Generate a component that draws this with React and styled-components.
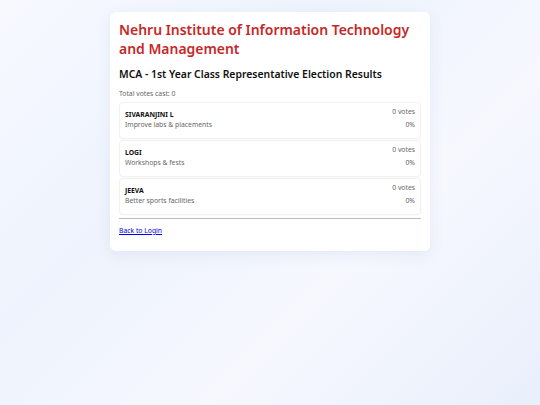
import React from 'react';
import styled, { createGlobalStyle } from 'styled-components';

const GlobalStyle = createGlobalStyle`
    html, body { margin:0; padding:0; }
    body {
        font-family: "Noto Sans", "Open Sans", sans-serif;
        min-height:405px;
        background: linear-gradient(135deg, #f7f9ff 0%, #eef3fd 35%, #f6f8fe 65%, #e9effb 100%);
    }
`;

const Page = styled.div`
    display:flex;
    justify-content:center;
    align-items:flex-start;
    padding-top:12px;
    min-height:405px;
    box-sizing:border-box;
`;

const Card = styled.div`
    width:320px;
    box-sizing:border-box;
    background:#fff;
    border-radius:6px;
    padding:9px 9px 15px;
    box-shadow: 0 4px 14px rgba(120,140,190,0.12);
`;

const Title = styled.h1`
    margin:0;
    color:#c62828;
    font-size:13.95px;
    line-height:18.5px;
    font-weight:600;
`;

const Subtitle = styled.h2`
    margin:9px 0 0;
    font-size:10.4px;
    line-height:14px;
    font-weight:600;
    color:#111;
`;

const Total = styled.p`
    margin:8px 0 3px;
    font-size:6.8px;
    line-height:10px;
    color:#666;
`;

const List = styled.div`
    display:flex;
    flex-direction:column;
    gap:1px;
`;

const Row = styled.div`
    display:flex;
    justify-content:space-between;
    height:37px;
    box-sizing:border-box;
    padding:4px 5px 0 5px;
    border:1px solid #f1f1f4;
    border-radius:4px;
    background:#fff;
    box-shadow: 0 1px 2px rgba(0,0,0,0.02);
`;

const Name = styled.div`
    font-size:6.8px;
    font-weight:700;
    color:#111;
    margin-top:3px;
    line-height:9.5px;
`;

const Desc = styled.div`
    font-size:6.8px;
    color:#666;
    line-height:9.5px;
`;

const Stats = styled.div`
    display:flex;
    flex-direction:column;
    align-items:flex-end;
    font-size:6.8px;
    color:#666;
    line-height:9.5px;
    gap:3.5px;
`;

const Divider = styled.hr`
    border:none;
    border-top:1px solid #bbb;
    margin:3px 0 6px;
`;

const Footer = styled.div`
    font-size:6.8px;
    line-height:10px;
    padding-top:1px;
`;

const BackLink = styled.a`
    color:#0000ee;
    text-decoration:underline;
`;

const candidates = [
    { name: 'SIVARANJINI L', desc: 'Improve labs & placements' },
    { name: 'LOGI', desc: 'Workshops & fests' },
    { name: 'JEEVA', desc: 'Better sports facilities' },
];

export default function App() {
    return (
        <React.Fragment>
            <GlobalStyle />
            <Page>
                <Card>
                    <Title>Nehru Institute of Information Technology and Management</Title>
                    <Subtitle>MCA - 1st Year Class Representative Election Results</Subtitle>
                    <Total>Total votes cast: 0</Total>
                    <List>
                        {candidates.map(c => (
                            <Row key={c.name}>
                                <div>
                                    <Name>{c.name}</Name>
                                    <Desc>{c.desc}</Desc>
                                </div>
                                <Stats>
                                    <span>0 votes</span>
                                    <span>0%</span>
                                </Stats>
                            </Row>
                        ))}
                    </List>
                    <Divider />
                    <Footer>
                        <BackLink href="#">Back to Login</BackLink>
                    </Footer>
                </Card>
            </Page>
        </React.Fragment>
    );
}
